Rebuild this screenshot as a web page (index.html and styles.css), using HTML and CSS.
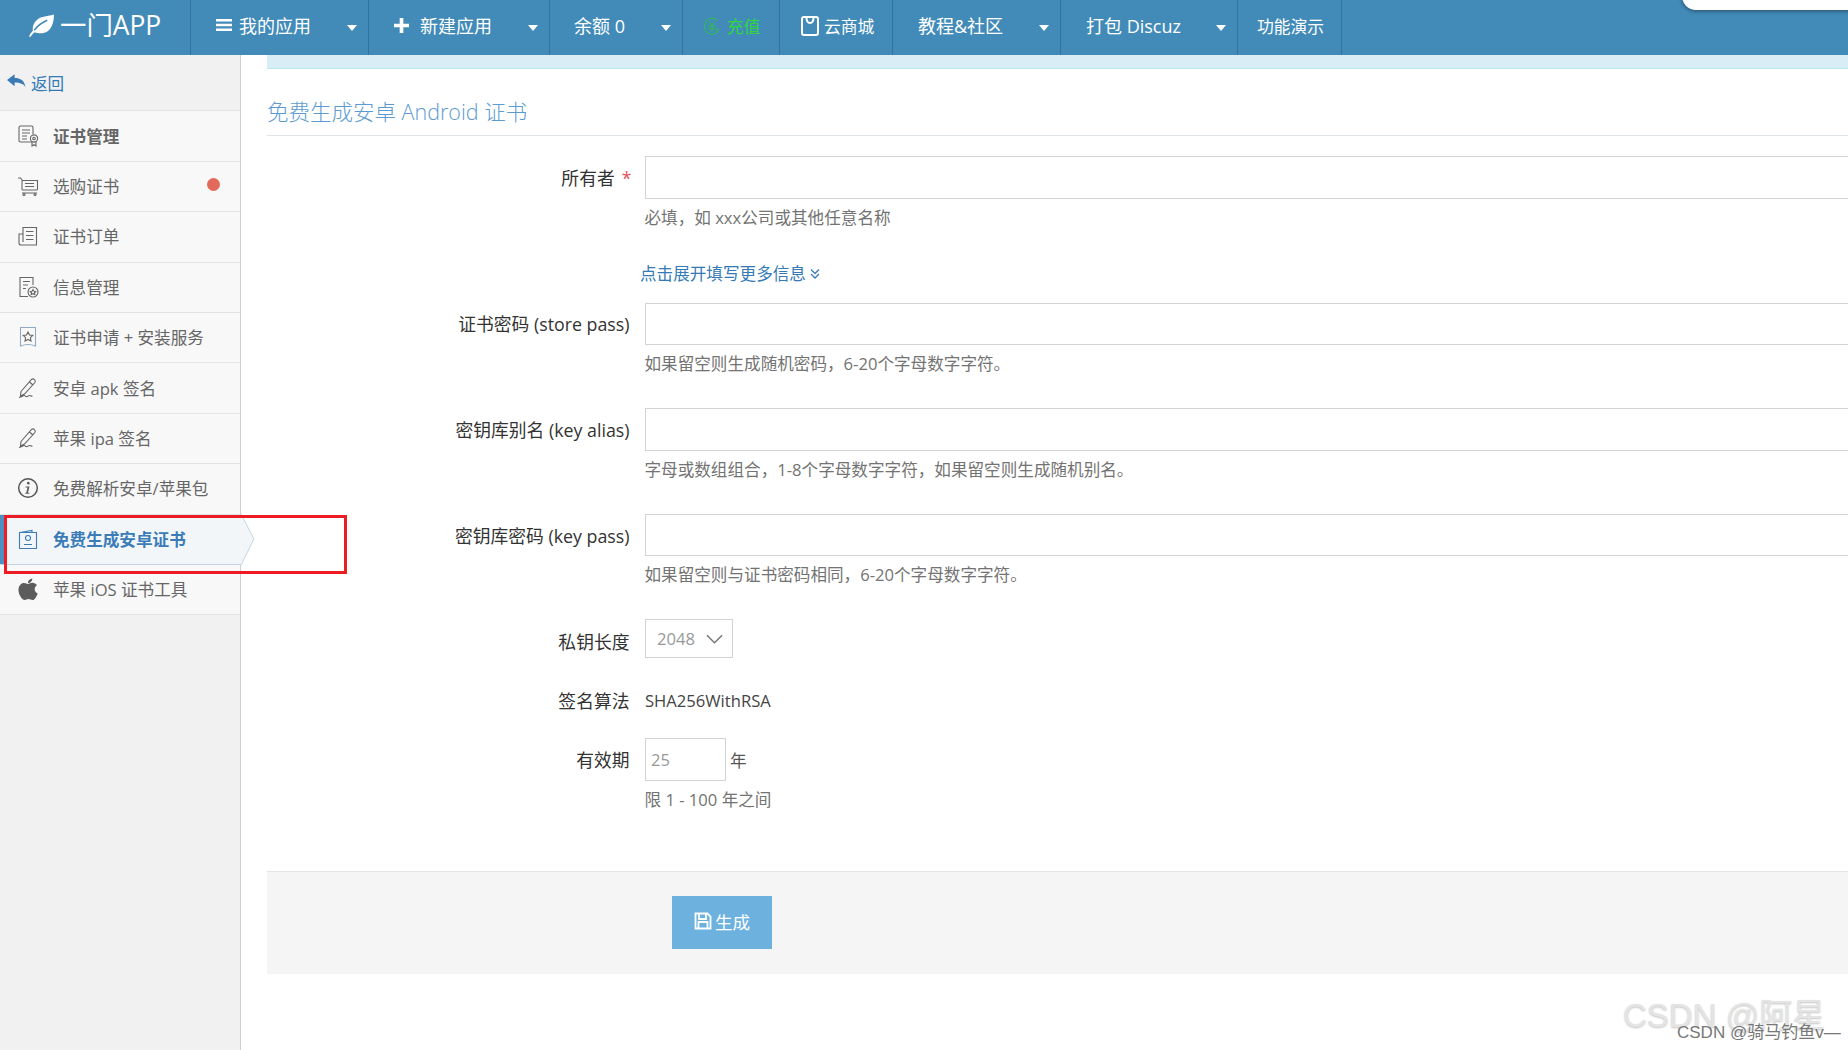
FILE: index.html
```html
<!DOCTYPE html>
<html lang="zh">
<head>
<meta charset="utf-8">
<title>免费生成安卓证书</title>
<link rel="stylesheet" href="styles.css">
</head>
<body>
<header class="topbar">
  <a class="logo">
    <svg class="logo-leaf" viewBox="0 0 28 24"><path d="M1 23.500C2 21 3.500 19 5 17.500 4 11 8.500 5.500 14 3.500 19 1.800 23.500 2 27 .5 27 7 25.500 14 20.500 18 16 21 10.500 20.500 7 19 5 20.500 3.500 22 2.500 24Z" fill="#fff"/><path d="M6.500 17C10 12 14 9 20 6.500" stroke="#428bb9" stroke-width="1.600" fill="none"/></svg>
    <span class="logo-text">一门APP</span>
  </a>
  <nav class="nav">
    <a class="nav-item nav-w1"><svg class="nav-ico" viewBox="0 0 16 14"><path d="M0 1h16v2.400H0zM0 5.800h16v2.400H0zM0 10.600h16V13H0z" fill="#fff"/></svg><span>我的应用</span><i class="caret"></i></a>
    <a class="nav-item nav-w2"><svg class="nav-ico nav-plus" viewBox="0 0 14 14"><path d="M5.300 0h3.400v5.300H14v3.400H8.700V14H5.300V8.700H0V5.300h5.300z" fill="#fff"/></svg><span>新建应用</span><i class="caret"></i></a>
    <a class="nav-item nav-w3"><span>余额 0</span><i class="caret"></i></a>
    <a class="nav-item nav-w4 nav-small nav-green"><svg class="nav-ico-g" viewBox="0 0 18 18" fill="none" stroke="#2fc14a" stroke-width="1"><path d="M14.500 3.200A8 8 0 1 0 14.800 15"/><path d="M6 4.500l3 4 3-4M5.500 9h7M5.500 12h7M9 8.500V15"/><path d="M13 11l3 2-3 2"/></svg><span>充值</span></a>
    <a class="nav-item nav-w5 nav-small"><svg class="nav-ico-b" viewBox="0 0 18 20" fill="none" stroke="#fff" stroke-width="2"><rect x="1" y="1" width="16" height="18" rx="2"/><path d="M5.500 1.500c0 4 2 5.500 3.500 5.500s3.500-1.500 3.500-5.500"/></svg><span>云商城</span></a>
    <a class="nav-item nav-w6"><span>教程&amp;社区</span><i class="caret"></i></a>
    <a class="nav-item nav-w7"><span>打包 Discuz</span><i class="caret"></i></a>
    <a class="nav-item nav-w8 nav-small"><span>功能演示</span></a>
  </nav>
</header>
<div class="search-pill"></div>

<div class="main">
  <aside class="sidebar">
    <a class="back"><svg class="back-ico" viewBox="0 0 20 14"><path d="M0 6 8 0v3.800c6 0 10.500 2.600 11.500 9.700C17.500 10 14 8.500 8 8.500V12.500Z" fill="#3c7ab5"/></svg><span>返回</span></a>
    <ul class="menu">
      <li class="menu-item menu-strong"><svg class="mi" viewBox="0 0 22 22"><path d="M15 17H3.500a1.500 1.500 0 0 1-1.500-1.500V2.500A1.500 1.500 0 0 1 3.500 1h11A1.500 1.500 0 0 1 16 2.500V9M5 5h8M5 8h8M5 11h5M5 14h5"/><circle cx="17" cy="13.500" r="3.600"/><circle cx="17" cy="13.500" r="1.300"/><path d="M15 17v4l2-1.300 2 1.300v-4"/></svg><span>证书管理</span></li>
      <li class="menu-item"><svg class="mi" viewBox="0 0 22 22"><path d="M1 3h2.500l2 2.500H20.500V14a1 1 0 0 1-1 1H6a1 1 0 0 1-1-1V5.500M8 8.500h9M8 11.500h9M5 18h15"/><circle cx="7" cy="19.500" r="1"/><circle cx="18" cy="19.500" r="1"/></svg><span>选购证书</span><i class="dot"></i></li>
      <li class="menu-item"><svg class="mi" viewBox="0 0 22 22"><path d="M6 17V2.500h13.500V20H4a2 2 0 0 1-2-2V9h4M9 6.500h7.500M9 10.500h7.500M9 14.500h7.500"/></svg><span>证书订单</span></li>
      <li class="menu-item"><svg class="mi" viewBox="0 0 22 22"><path d="M16 9V1.500H3V20.500H11M6 5.500h7M6 9h5M6 12.500h3"/><circle cx="16" cy="16" r="5"/><path d="M16 13.500l1 1.700 1.800.3-1.300 1.300.3 1.800-1.800-.9-1.800.9.300-1.800-1.300-1.300 1.800-.3z"/></svg><span>信息管理</span></li>
      <li class="menu-item"><svg class="mi mi-blue" viewBox="0 0 22 22"><path d="M3.500 1.500h15v18.500c-5-2-10-2-15 0z"/><path class="mi-star" d="M11 6l1.500 3 3.300.4-2.400 2.300.6 3.300-3-1.600-3 1.600.6-3.300-2.400-2.300 3.300-.4z"/></svg><span>证书申请 + 安装服务</span></li>
      <li class="menu-item"><svg class="mi" viewBox="0 0 22 22"><path d="M4 14.500 14.500 2.500a2.300 2.300 0 0 1 3.400 3L7.500 17 3.500 19ZM12.500 5l3.500 3M2 20.500c3-1 3.500-1.500 5-2 1.500-.5 1 1.500 2.500 1.200s2-1.200 3-1.200 1.500.8 3 .8"/></svg><span>安卓 apk 签名</span></li>
      <li class="menu-item"><svg class="mi" viewBox="0 0 22 22"><path d="M4 14.500 14.500 2.500a2.300 2.300 0 0 1 3.400 3L7.500 17 3.500 19ZM12.500 5l3.500 3M2 20.500c3-1 3.500-1.500 5-2 1.500-.5 1 1.500 2.500 1.200s2-1.200 3-1.200 1.500.8 3 .8"/></svg><span>苹果 ipa 签名</span></li>
      <li class="menu-item"><svg class="mi mi-bold" viewBox="0 0 22 22"><circle cx="11" cy="11" r="9.300"/><path class="mi-fill" d="M11.400 4.800a1.400 1.400 0 1 1-.1 2.800 1.400 1.400 0 0 1 .1-2.800zM8.500 9.600h4l-1.500 6.200h1.300v1H8.300v-1h1L10.500 10.600H8.500z"/></svg><span>免费解析安卓/苹果包</span></li>
      <li class="menu-item menu-active"><svg class="mi mi-active" viewBox="0 0 22 22"><path d="M3 4.500 15 2.500V4.500M2.500 4.500h17V20.500h-17zM7 16.500h8"/><circle cx="11" cy="10" r="2.500"/></svg><span>免费生成安卓证书</span><svg class="active-arrow" viewBox="0 0 14 52"><path d="M0 0 13 25.500 0 52" fill="#f2f6f9" stroke="#c3d4e2" stroke-width="1"/></svg></li>
      <li class="menu-item"><svg class="mi mi-apple" viewBox="0 0 22 24"><path class="mi-fill" d="M15.300 1c.1 2.500-2 4.600-4.300 4.500C10.800 3.200 13 1.200 15.300 1zM11 6.500c1 0 2.500-1.200 4.500-1.200 1.800 0 3.500.9 4.500 2.500-3.400 2-2.900 6.700.7 8.100-.9 2.500-3 6.600-5.200 6.600-1.500 0-2.200-1-3.900-1-1.800 0-2.500 1-3.900 1C4.800 22.500 1.500 16.800 1.500 12.500c0-4.300 2.700-7 5.500-7 1.800 0 3 1 4 1z"/></svg><span>苹果 iOS 证书工具</span></li>
    </ul>
  </aside>

  <section class="content">
    <div class="content-inner">
      <div class="notice"></div>
      <h1 class="page-title">免费生成安卓 Android 证书</h1>
      <form class="form">
        <div class="field">
          <label class="field-label">所有者<span class="req">*</span></label>
          <input class="text-input" type="text">
        </div>
        <p class="help">必填，如 xxx公司或其他任意名称</p>

        <a class="more">点击展开填写更多信息<svg class="more-ico" viewBox="0 0 10 12" fill="none" stroke="#3c7ab5" stroke-width="1.300"><path d="M1 1.500 5 5.500 9 1.500M1 6 5 10 9 6"/></svg></a>

        <div class="field field-gap-s">
          <label class="field-label">证书密码 (store pass)</label>
          <input class="text-input" type="text">
        </div>
        <p class="help">如果留空则生成随机密码，6-20个字母数字字符。</p>

        <div class="field field-gap">
          <label class="field-label">密钥库别名 (key alias)</label>
          <input class="text-input" type="text">
        </div>
        <p class="help">字母或数组组合，1-8个字母数字字符，如果留空则生成随机别名。</p>

        <div class="field field-gap">
          <label class="field-label">密钥库密码 (key pass)</label>
          <input class="text-input" type="text">
        </div>
        <p class="help">如果留空则与证书密码相同，6-20个字母数字字符。</p>

        <div class="field field-select">
          <label class="field-label label-low">私钥长度</label>
          <div class="select"><span>2048</span><svg class="select-ico" viewBox="0 0 18 10" fill="none" stroke="#777" stroke-width="1.600"><path d="M1 1l8 8 8-8"/></svg></div>
        </div>

        <div class="field field-static">
          <label class="field-label">签名算法</label>
          <span class="static-value">SHA256WithRSA</span>
        </div>

        <div class="field field-years">
          <label class="field-label">有效期</label>
          <input class="text-input years-input" type="text" value="25">
          <span class="unit">年</span>
        </div>
        <p class="help">限 1 - 100 年之间</p>

        <div class="actions">
          <button class="btn" type="button"><svg class="btn-ico" viewBox="0 0 18 18" fill="none" stroke="#fff" stroke-width="1.800"><path d="M1.500 1.500h12l3 3v12h-15zM5 2v5h7V2M4.500 16v-6h9v6"/></svg>生成</button>
        </div>
      </form>
    </div>
  </section>
</div>

<div class="red-mark"></div>
<div class="wm-large">CSDN @阿星</div>
<div class="wm-small">CSDN @骑马钓鱼v—</div>
</body>
</html>
```

FILE: styles.css
```css
* { box-sizing: border-box; }
html, body { height: 100%; }
body {
  margin: 0;
  height: 1050px;
  overflow: hidden;
  background: #fff;
  color: #333;
  font-family: "Open Sans", "Noto Sans CJK SC", sans-serif;
  font-size: 16.6px;
  position: relative;
}
ul { list-style: none; margin: 0; padding: 0; }
h1, p { margin: 0; }

/* top bar */
.topbar { display: flex; height: 55px; background: #428bb9; color: #fff; }
.logo { width: 190px; display: flex; align-items: center; padding: 0 0 5px 28px; }
.logo-leaf { width: 27px; height: 23px; }
.logo-text { margin-left: 5px; font-size: 26.4px; line-height: 1; white-space: nowrap; }
.nav { display: flex; }
.nav-item {
  display: flex; align-items: center; height: 55px; padding-bottom: 5px; font-size: 18px;
  border-left: 1px solid #2f739e; white-space: nowrap;
}
.nav-small { font-size: 16.8px; padding-bottom: 4px; }
.nav-item:last-child { border-right: 1px solid #2f739e; }
.nav-w1 { width: 178px; padding-left: 25px; }
.nav-w2 { width: 181px; padding-left: 25px; }
.nav-w3 { width: 133px; padding-left: 24px; }
.nav-w4 { width: 97px; padding-left: 20px; }
.nav-w5 { width: 113px; padding-left: 21px; }
.nav-w6 { width: 168px; padding-left: 25px; }
.nav-w7 { width: 177px; padding-left: 25px; }
.nav-w8 { width: 105px; padding-left: 19px; }
.nav-ico { width: 16px; height: 14px; margin-right: 7px; }
.nav-plus { width: 15px; height: 15px; margin-right: 11px; }
.nav-ico-g { width: 18px; height: 18px; margin-right: 6px; }
.nav-ico-b { width: 18px; height: 20px; margin-right: 5px; }
.nav-green { color: #2fd63f; }
.caret {
  margin: 5px 11px 0 auto; width: 0; height: 0;
  border-left: 5px solid transparent; border-right: 5px solid transparent;
  border-top: 6px solid #fff;
}
.search-pill {
  position: absolute; top: -20px; left: 1682px; width: 200px; height: 30px;
  background: #fff; border-radius: 0 0 0 14px; box-shadow: 0 1px 4px rgba(0,0,0,.45);
}

/* layout */
.main { display: flex; height: 995px; }

/* sidebar */
.sidebar { width: 241px; flex: none; background: #f1f1f1; border-right: 1px solid #cfcfcf; }
.back {
  display: flex; align-items: center; height: 56.4px; padding: 0 0 0 7px;
  color: #337ab7; border-bottom: 1px solid #e3e3e3;
}
.back-ico { width: 19px; height: 14px; margin: -3px 5px 0 0; }
.menu-item {
  position: relative; display: flex; align-items: center; height: 50.4px;
  padding: 0 0 1px 17px; background: #f8f8f8; color: #666;
  border-bottom: 1px solid #e3e3e3; white-space: nowrap;
}
.menu-strong { font-weight: 700; }
.mi {
  width: 22px; height: 22px; flex: none; margin-right: 14px;
  fill: none; stroke: #666; stroke-width: 1.1;
}
.mi .mi-fill { fill: #5c5c5c; stroke: none; }
.mi-bold { stroke: #555; stroke-width: 1.500; }
.mi-blue { stroke: #90a8c0; }
.mi-blue .mi-star { stroke: #666; }
.mi-apple { height: 25px; }
.dot {
  margin-left: auto; margin-right: 20px; margin-top: -2px; width: 13px; height: 13px;
  border-radius: 50%; background: #e26a5a;
}
.menu-active {
  background: #f2f6f9; color: #3a7bb8; font-weight: 700;
  margin-right: -1px; box-shadow: inset 4px 0 0 #4d90c0;
  border-bottom-color: #c3d4e2;
}
.mi-active { stroke: #3a7bb8; }
.active-arrow {
  position: absolute; left: 100%; top: -.5px; width: 14px; height: 51px; overflow: visible;
}

/* content */
.content { flex: 1; min-width: 0; overflow: hidden; padding-left: 26px; }
.content-inner { width: 1800px; }
.notice { height: 14px; background: #d9edf7; border-bottom: 1px solid #bce8f1; }
.page-title {
  height: 67px; padding-top: 28px; line-height: 30px;
  font-size: 21.5px; font-weight: 300; color: #5c9bd1;
  border-bottom: 1px solid #dfe4e8;
}
.form { padding-top: 20px; }
.field { display: flex; align-items: center; }
.field-label {
  width: 362.5px; flex: none; margin-right: 15.5px; padding-top: 1px; text-align: right;
  font-size: 17.8px; line-height: 24px; color: #333;
}
.req { color: #e7505a; margin: 0 -2px 0 7px; position: relative; }
.text-input {
  flex: 1; min-width: 0; height: 42.6px; padding: 0 5px;
  border: 1px solid #d2d2d2; background: #fff; border-radius: 0; outline: 0;
  font: inherit; color: #999;
}
.help { margin-top: 7px; padding-left: 377.5px; line-height: 24px; color: #737373; }
.field-gap { margin-top: 32px; }
.field-gap-s { margin-top: 17px; }
.more { display: block; margin-top: 32px; padding-left: 373px; line-height: 24px; color: #337ab7; }
.more-ico { width: 10px; height: 12px; margin-left: 4px; }
.field-select { margin-top: 32px; }
.label-low { position: relative; top: 3px; }
.select {
  display: flex; align-items: center; justify-content: space-between;
  width: 88px; height: 39px; padding: 0 9px 0 11px;
  border: 1px solid #d2d2d2; color: #999;
}
.select-ico { width: 17px; height: 10px; }
.field-static { margin-top: 30px; }
.static-value { line-height: 24px; color: #444; padding-top: 1px; }
.field-years { margin-top: 25px; }
.years-input { flex: none; width: 81px; }
.unit { margin-left: 4px; color: #555; }
.actions {
  margin-top: 59px; padding: 24px 0 25px 405px; background: #f5f5f5; border-top: 1px solid #e5e5e5;
}
.btn {
  display: flex; align-items: center; justify-content: center;
  width: 100px; height: 53px; border: 0; padding: 0 0 2px; background: #6db1de; color: #fff;
  font: inherit; font-size: 17.6px;
}
.btn-ico { width: 18px; height: 18px; margin-right: 3px; }

/* overlays */
.red-mark {
  position: absolute; left: 4px; top: 515px; width: 343px; height: 59px;
  border: 3px solid #ed1c24; pointer-events: none;
}
.wm-large {
  position: absolute; left: 1623px; top: 994px; font-family: "Liberation Sans", "Noto Sans CJK SC", sans-serif;
  font-size: 33px; line-height: 44px; color: #e4e4e4; text-shadow: 0 1px 2px #c4c4c4; white-space: nowrap;
}
.wm-small {
  position: absolute; left: 1677px; top: 1021px; font-family: "Liberation Sans", "Noto Sans CJK SC", sans-serif;
  font-size: 17px; line-height: 24px; color: #777; white-space: nowrap;
}
```
